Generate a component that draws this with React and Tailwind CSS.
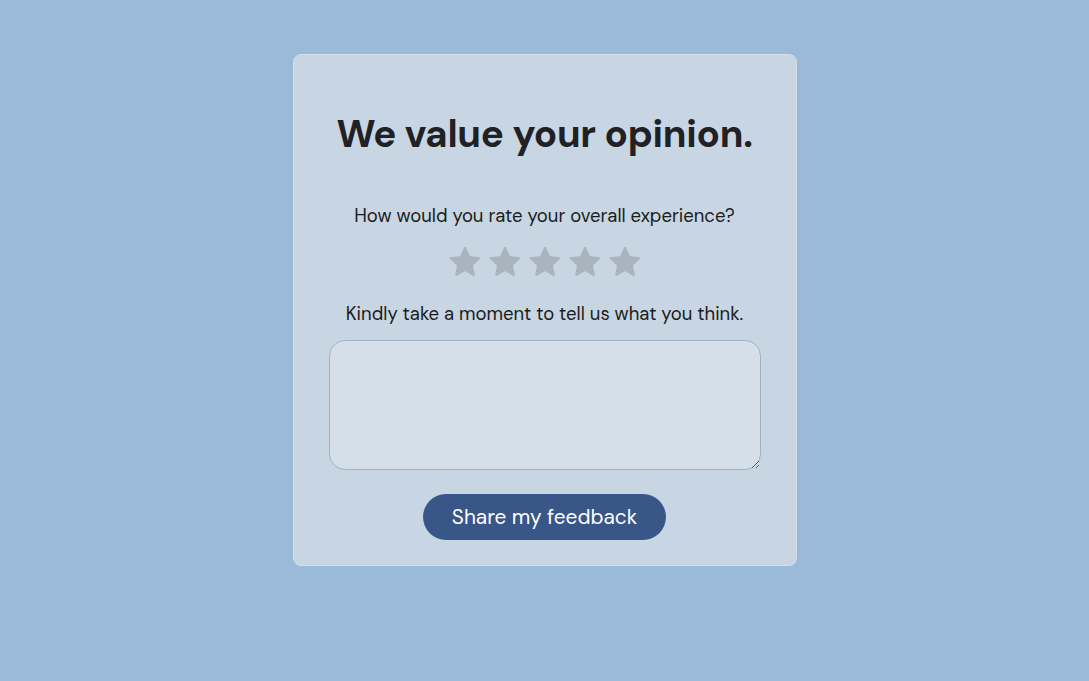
import React from "react";

function Star() {
  return (
    <svg width="34" height="34" viewBox="0 0 24 24" fill="#a9b4bf">
      <path d="M12 1.8l3.1 6.6 7.1.9-5.2 4.9 1.3 7.1L12 17.8l-6.3 3.5 1.3-7.1-5.2-4.9 7.1-.9z" strokeLinejoin="round" stroke="#a9b4bf" strokeWidth="1.2" />
    </svg>
  );
}

export default function App() {
  return (
    <div
      className="min-h-[681px] w-full bg-[#9bbad9] flex justify-center pt-[54px]"
      style={{ fontFamily: "'DM Sans', Inter, 'Liberation Sans', sans-serif" }}
    >
      <div className="w-[504px] h-[512px] bg-[#c8d5e2] border border-[#d6dfe8] rounded-[8px] flex flex-col items-center px-[36px] pt-[56px]">
        <h1 className="text-[38.5px] leading-[46px] font-bold text-[#1f2124] tracking-[-0.3px]">
          We value your opinion.
        </h1>
        <p className="mt-[46px] text-[18.5px] leading-[26px] text-[#1a1c20]">
          How would you rate your overall experience?
        </p>
        <div className="mt-[16px] flex gap-[6px]">
          <Star />
          <Star />
          <Star />
          <Star />
          <Star />
        </div>
        <p className="mt-[22px] text-[18.5px] leading-[26px] text-[#1a1c20]">
          Kindly take a moment to tell us what you think.
        </p>
        <textarea className="mt-[13px] w-[432px] h-[130px] shrink-0 bg-[#d4dfe9] border border-[#a3b2c2] rounded-[16px] resize-y outline-none p-3" />
        <button className="mt-[24px] w-[243px] h-[46px] shrink-0 rounded-full bg-[#385788] text-white text-[20.8px] font-normal">
          Share my feedback
        </button>
      </div>
    </div>
  );
}
